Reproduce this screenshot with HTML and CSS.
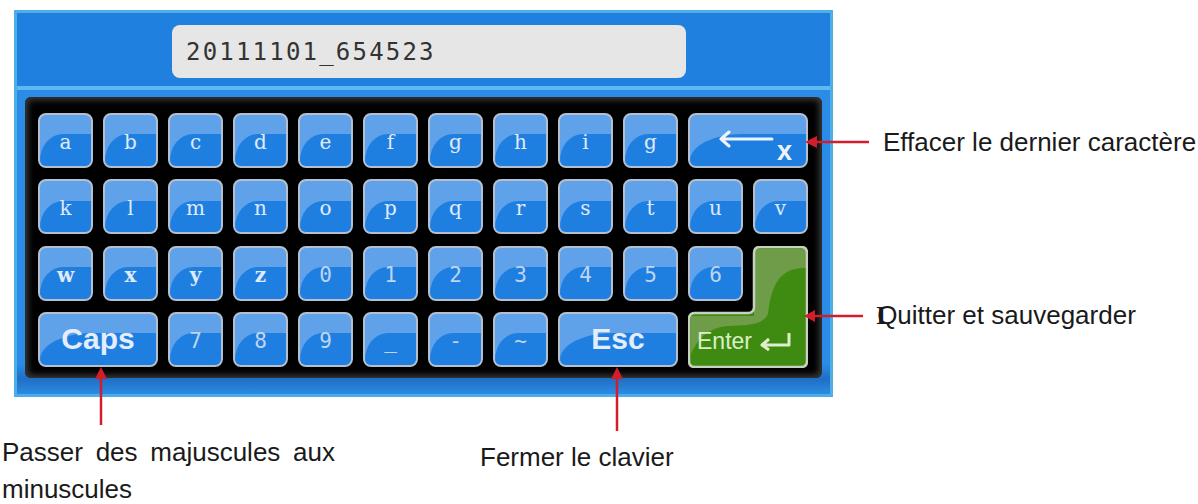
FILE: index.html
```html
<!DOCTYPE html>
<html lang="fr">
<head>
<meta charset="utf-8">
<title>Clavier</title>
<link rel="stylesheet" href="styles.css">
</head>
<body>
<div class="sheet">
  <div class="upper">
    <div class="panel">
      <div class="head">
        <div class="field">20111101_654523</div>
      </div>
      <div class="sep"></div>
      <div class="body">
        <div class="board">
          <div class="keys">
            <div class="key"><span>a</span></div>
            <div class="key"><span>b</span></div>
            <div class="key"><span>c</span></div>
            <div class="key"><span>d</span></div>
            <div class="key"><span>e</span></div>
            <div class="key"><span>f</span></div>
            <div class="key"><span>g</span></div>
            <div class="key"><span>h</span></div>
            <div class="key"><span>i</span></div>
            <div class="key"><span>g</span></div>
            <div class="key wide back">
              <svg class="back-arrow" width="56" height="18" viewBox="0 0 56 18"><path d="M3 9 H54 M11 2 L3 9 L11 16" fill="none" stroke="#eef4fc" stroke-width="3" stroke-linecap="round" stroke-linejoin="round"/></svg>
              <span class="x">x</span>
            </div>

            <div class="key"><span>k</span></div>
            <div class="key"><span>l</span></div>
            <div class="key"><span>m</span></div>
            <div class="key"><span>n</span></div>
            <div class="key"><span>o</span></div>
            <div class="key"><span>p</span></div>
            <div class="key"><span>q</span></div>
            <div class="key"><span>r</span></div>
            <div class="key"><span>s</span></div>
            <div class="key"><span>t</span></div>
            <div class="key"><span>u</span></div>
            <div class="key"><span>v</span></div>

            <div class="key heavy"><span>w</span></div>
            <div class="key heavy"><span>x</span></div>
            <div class="key heavy"><span>y</span></div>
            <div class="key heavy"><span>z</span></div>
            <div class="key num"><span>0</span></div>
            <div class="key num"><span>1</span></div>
            <div class="key num"><span>2</span></div>
            <div class="key num"><span>3</span></div>
            <div class="key num"><span>4</span></div>
            <div class="key num"><span>5</span></div>
            <div class="enter">
              <svg class="enter-bg" width="120" height="122" viewBox="0 0 120 122">
                <path d="M66 7 Q66 1 72 1 L113 1 Q119 1 119 7 L119 115 Q119 121 113 121 L7 121 Q1 121 1 115 L1 73 Q1 67 7 67 L60 67 Q66 67 66 61 Z" fill="#3f8b12"/>
                <path d="M66 3 L118 3 L118 22 C98 22 84 30 80 68 C74 80 58 79 40 80 C20 82 10 92 3 108 L3 70 L66 70 Z" fill="#6f9c48"/>
                <path d="M66 7 Q66 1 72 1 L113 1 Q119 1 119 7 L119 115 Q119 121 113 121 L7 121 Q1 121 1 115 L1 73 Q1 67 7 67 L60 67 Q66 67 66 61 Z" fill="none" stroke="#c7cfc0" stroke-width="2.5"/>
              </svg>
              <div class="enter-label">
                <span>Enter</span>
                <svg width="34" height="20" viewBox="0 0 34 20"><path d="M31 2 V14 H5 M11 8 L4 14 L11 19" fill="none" stroke="#dcefc8" stroke-width="3" stroke-linejoin="round"/></svg>
              </div>
            </div>
            <div class="key num six"><span>6</span></div>

            <div class="key wide big"><span>Caps</span></div>
            <div class="key num"><span>7</span></div>
            <div class="key num"><span>8</span></div>
            <div class="key num"><span>9</span></div>
            <div class="key num"><span>_</span></div>
            <div class="key num"><span>-</span></div>
            <div class="key num"><span>~</span></div>
            <div class="key wide big"><span>Esc</span></div>
          </div>
        </div>
      </div>
    </div>
    <div class="side">
      <p class="note note-del">Effacer le dernier caractère</p>
      <p class="note note-enter">IQuitter et sauvegarder</p>
    </div>
  </div>
  <div class="lower">
    <p class="note note-caps">Passer des majuscules aux minuscules</p>
    <p class="note note-esc">Fermer le clavier</p>
  </div>
  <svg class="arrows" width="1198" height="504" viewBox="0 0 1198 504">
    <g stroke="#d21e2a" stroke-width="2.5" fill="none">
      <line x1="814" y1="142" x2="869" y2="142"/>
      <line x1="812" y1="316" x2="863" y2="316"/>
      <line x1="101" y1="376" x2="101" y2="425"/>
      <line x1="617" y1="376" x2="617" y2="431"/>
    </g>
    <g fill="#d21e2a">
      <polygon points="805,142 817,136 817,148"/>
      <polygon points="804,316 815,310 815,322"/>
      <polygon points="101,367 95,379 107,379"/>
      <polygon points="617,367 611,379 623,379"/>
    </g>
  </svg>
</div>
</body>
</html>
```

FILE: styles.css
```css
body {
  margin: 0;
  background: #ffffff;
  font-family: "Liberation Sans", Arial, sans-serif;
}

.sheet {
  position: relative;
  width: 1198px;
  height: 504px;
  overflow: hidden;
}

.upper {
  display: flex;
  padding: 10px 0 0 14px;
}

.panel {
  box-sizing: border-box;
  width: 819px;
  height: 387px;
  background: #1f80e0;
  border: 3px solid #4eaee8;
  display: flex;
  flex-direction: column;
}

.head {
  height: 73px;
  display: flex;
  align-items: center;
  padding: 3px 0 0 155px;
  box-sizing: border-box;
}

.field {
  box-sizing: border-box;
  width: 514px;
  height: 53px;
  background: #e6e6e6;
  border-radius: 8px;
  display: flex;
  align-items: center;
  padding: 2px 0 0 14px;
  font-family: "DejaVu Sans Mono", monospace;
  font-size: 24px;
  letter-spacing: 2.2px;
  color: #333333;
}

.sep {
  height: 4px;
  background: #5db9ef;
}

.body {
  flex: 1;
  display: flex;
  padding: 7px 8px 16px 8px;
  background: linear-gradient(to bottom, #2a8ce6 0%, #2a8ce6 90%, #1f6fc4 95%, #2b8ce4 100%);
}

.board {
  box-sizing: border-box;
  flex: 1;
  background: #000000;
  border-radius: 6px;
  box-shadow: inset 0 0 6px 3px #3c3c3c;
  padding: 16px 0 0 13px;
}

.keys {
  display: grid;
  grid-template-columns: repeat(12, 55px);
  grid-auto-rows: 55px;
  column-gap: 10px;
  row-gap: 11.3px;
}

.key {
  position: relative;
  box-sizing: border-box;
  border: 2.5px solid #b6bfce;
  border-radius: 8px;
  background: #60a2ea;
  overflow: hidden;
  display: flex;
  align-items: center;
  justify-content: center;
  padding-top: 3px;
  color: #e0ebfa;
  font-family: "DejaVu Serif", "Liberation Serif", serif;
  font-size: 20px;
}

.key::before {
  content: "";
  position: absolute;
  left: 0;
  right: 0;
  bottom: 0;
  top: 38%;
  background: #1f7fe1;
  border-top-left-radius: 45% 85%;
}

.key > span,
.key > svg {
  position: relative;
}

.heavy {
  font-weight: bold;
}

.num {
  font-family: "DejaVu Sans Mono", monospace;
  font-size: 21px;
  color: #bfd5ef;
}

.wide {
  grid-column: span 2;
}

.big {
  font-family: "Liberation Sans", Arial, sans-serif;
  font-weight: bold;
  font-size: 30px;
  color: #e4eefb;
  padding-top: 0;
}

.back {
  justify-content: flex-start;
  align-items: flex-start;
  padding: 14px 0 0 28px;
}

.back-arrow {
  margin-top: 1px;
}

.back .x {
  font-family: "Liberation Sans", Arial, sans-serif;
  font-weight: bold;
  font-size: 27px;
  line-height: 27px;
  color: #eef4fc;
  margin: 9px 0 0 3px;
}

.six {
  grid-column: 11;
  grid-row: 3;
  z-index: 1;
}

.enter {
  grid-column: 11 / 13;
  grid-row: 3 / 5;
  position: relative;
  display: flex;
  align-items: flex-end;
}

.enter-bg {
  position: absolute;
  left: 0;
  top: 0;
}

.enter-label {
  position: relative;
  height: 55px;
  display: flex;
  align-items: center;
  gap: 6px;
  padding: 4px 0 0 9px;
  box-sizing: border-box;
  font-size: 23px;
  color: #dcefc8;
}

.side {
  display: flex;
  flex-direction: column;
  padding-left: 50px;
}

.note {
  margin: 0;
  font-size: 26px;
  line-height: 30px;
  color: #1a1a1a;
  white-space: nowrap;
}

.note-del {
  margin-top: 117px;
}

.note-enter {
  margin-top: 143px;
  margin-left: -7px;
}

.note-enter::first-letter {
  font-family: "Liberation Serif", serif;
  font-weight: bold;
  letter-spacing: -9px;
}

.lower {
  display: flex;
  align-items: flex-start;
}

.note-caps {
  width: 333px;
  margin-left: 2px;
  margin-top: 37px;
  line-height: 37px;
  white-space: normal;
  text-align: justify;
}

.note-esc {
  margin-left: 145px;
  margin-top: 42px;
  line-height: 37px;
}

.arrows {
  position: absolute;
  left: 0;
  top: 0;
  pointer-events: none;
}
```
